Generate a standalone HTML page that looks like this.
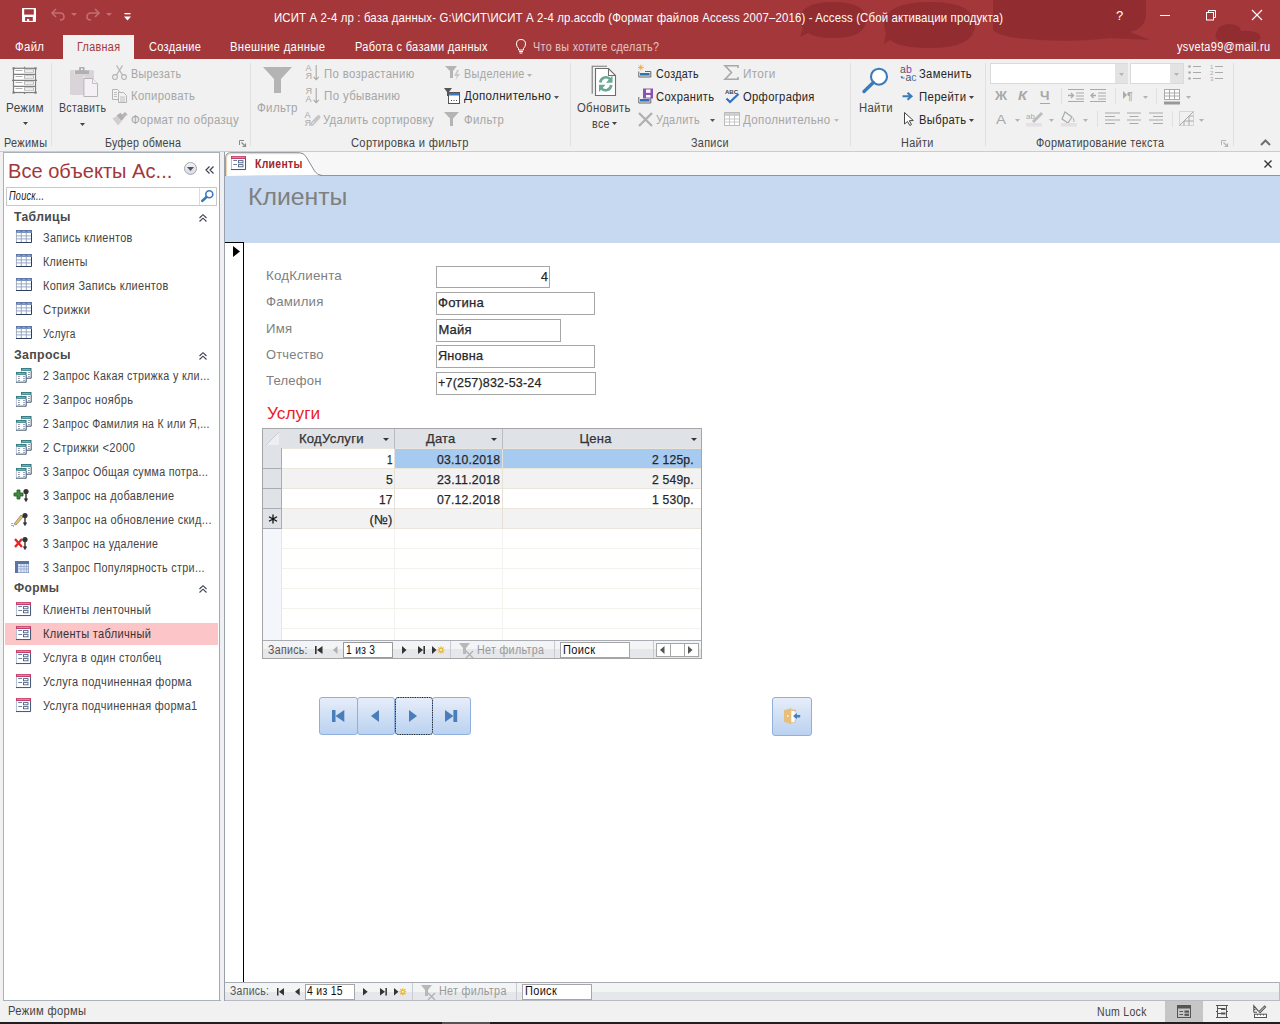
<!DOCTYPE html>
<html><head><meta charset="utf-8">
<style>
*{margin:0;padding:0;box-sizing:border-box}
html,body{width:1280px;height:1024px;overflow:hidden;background:#fff;position:relative}
.t{position:absolute;white-space:nowrap}
svg{overflow:visible}
</style></head><body>
<div style="position:absolute;left:0px;top:0px;width:1280px;height:59px;background:#a4373a"></div>
<svg style="position:absolute;left:0;top:0" width="1280" height="59"><g fill="#8a2a2d" opacity="0.7"><path d="M833 2 Q866 2 866 20 Q866 38 833 38 Q815 38 808 33 L800 37 L803 28 Q800 24 800 20 Q800 2 833 2Z"/><path d="M930 2 Q975 2 975 25 Q975 48 930 48 Q900 48 890 40 L884 44 L886 33 Q884 29 884 25 Q884 2 930 2Z"/><path d="M993 0 H1146 V14 Q1146 28 1130 32 L1150 40 L1110 38 Q1080 42 1040 40 Q1000 38 993 30Z"/><path d="M1228 24 Q1240 24 1241 31 Q1250 30 1258 33 Q1264 38 1256 42 H1222 Q1214 40 1216 33 Q1218 25 1228 24Z"/></g></svg>
<svg style="position:absolute;left:22px;top:8px" width="14" height="14" viewBox="0 0 14 14"><rect x="0" y="0" width="14" height="14" rx="0.8" fill="#fff"/><rect x="2.2" y="1.3" width="9.6" height="5.3" fill="#a4373a"/><rect x="3.1" y="9" width="7.7" height="3.9" fill="#a4373a"/><rect x="5" y="10.9" width="2.2" height="2.1" fill="#fff"/></svg>
<svg style="position:absolute;left:50px;top:8px" width="16" height="13" viewBox="0 0 16 13"><path d="M3 5 H10 Q14 5 14 9 Q14 12 10 12" fill="none" stroke="#c46f72" stroke-width="1.6"/><path d="M6 1 L2 5 L6 9" fill="none" stroke="#c46f72" stroke-width="1.6"/></svg>
<svg style="position:absolute;left:71px;top:13px" width="6" height="3" viewBox="0 0 6 3"><path d="M0 0 H6 L3 3Z" fill="#c46f72"/></svg>
<svg style="position:absolute;left:85px;top:8px" width="16" height="13" viewBox="0 0 16 13"><path d="M13 5 H6 Q2 5 2 9 Q2 12 6 12" fill="none" stroke="#c46f72" stroke-width="1.6"/><path d="M10 1 L14 5 L10 9" fill="none" stroke="#c46f72" stroke-width="1.6"/></svg>
<svg style="position:absolute;left:106px;top:13px" width="6" height="3" viewBox="0 0 6 3"><path d="M0 0 H6 L3 3Z" fill="#c46f72"/></svg>
<svg style="position:absolute;left:124px;top:13px" width="7" height="8" viewBox="0 0 7 8"><rect x="0.5" y="0" width="6" height="1.3" fill="#fff"/><path d="M0 3.5 H7 L3.5 7.5Z" fill="#fff"/></svg>
<div style="position:absolute;left:1160px;top:15px;width:10px;height:1px;background:#fff"></div>
<svg style="position:absolute;left:1205px;top:9px" width="12" height="12" viewBox="0 0 12 12"><rect x="1.5" y="3.5" width="7" height="7.5" fill="none" stroke="#fff" stroke-width="1"/><path d="M3.5 3.5 V1.5 H10.5 V8.5 H8.5" fill="none" stroke="#fff" stroke-width="1"/></svg>
<svg style="position:absolute;left:1251px;top:9px" width="12" height="12" viewBox="0 0 12 12"><path d="M1 1 L11 11 M11 1 L1 11" stroke="#fff" stroke-width="1.1"/></svg>
<div style="position:absolute;left:63px;top:35px;width:71px;height:24px;background:#f1f1f1"></div>
<svg style="position:absolute;left:515px;top:38px" width="12" height="16" viewBox="0 0 12 16"><path d="M6 1.5 Q10.5 1.5 10.5 6 Q10.5 8.5 8.5 10.5 V12 H3.5 V10.5 Q1.5 8.5 1.5 6 Q1.5 1.5 6 1.5Z" fill="none" stroke="#fff" stroke-width="1"/><path d="M4 13.5 H8 M4.5 15 H7.5" stroke="#fff" stroke-width="1"/></svg>
<div style="position:absolute;left:0px;top:59px;width:1280px;height:93px;background:#f1f1f1"></div>
<div style="position:absolute;left:0px;top:151px;width:1280px;height:1px;background:#cccccc"></div>
<div style="position:absolute;left:51px;top:63px;width:1px;height:83px;background:#e0e0e0"></div>
<div style="position:absolute;left:250px;top:63px;width:1px;height:83px;background:#e0e0e0"></div>
<div style="position:absolute;left:570px;top:63px;width:1px;height:83px;background:#e0e0e0"></div>
<div style="position:absolute;left:850px;top:63px;width:1px;height:83px;background:#e0e0e0"></div>
<div style="position:absolute;left:985px;top:63px;width:1px;height:83px;background:#e0e0e0"></div>
<div style="position:absolute;left:1233px;top:63px;width:1px;height:83px;background:#e0e0e0"></div>
<svg style="position:absolute;left:239px;top:140px" width="7" height="7" viewBox="0 0 7 7"><path d="M0.5 5 V0.5 H5" fill="none" stroke="#8a8a8a" stroke-width="1"/><path d="M2.5 2.5 L6.5 6.5 M3.5 6.5 H6.5 V3.5" fill="none" stroke="#8a8a8a" stroke-width="1.2"/></svg>
<svg style="position:absolute;left:1221px;top:140px" width="7" height="7" viewBox="0 0 7 7"><g opacity="0.6"><path d="M0.5 5 V0.5 H5" fill="none" stroke="#8a8a8a" stroke-width="1"/><path d="M2.5 2.5 L6.5 6.5 M3.5 6.5 H6.5 V3.5" fill="none" stroke="#8a8a8a" stroke-width="1.2"/></g></svg>
<svg style="position:absolute;left:1260px;top:139px" width="11" height="7" viewBox="0 0 11 7"><path d="M1 6 L5.5 1.5 L10 6" fill="none" stroke="#707070" stroke-width="2"/></svg>
<svg style="position:absolute;left:12px;top:66px" width="26" height="29" viewBox="0 0 26 29"><rect x="1.5" y="2.3" width="22" height="24.2" fill="#fff" stroke="#7f7f7f" stroke-width="1.2"/><path d="M3.5 4.5 H10.5" stroke="#b0b0b0" stroke-width="1"/><rect x="12.5" y="3.8" width="9" height="2.4" fill="none" stroke="#b0b0b0" stroke-width="0.9"/><path d="M3.5 10.5 H10.5" stroke="#b0b0b0" stroke-width="1"/><rect x="12.5" y="9.8" width="9" height="2.4" fill="none" stroke="#b0b0b0" stroke-width="0.9"/><path d="M3.5 16.5 H10.5" stroke="#b0b0b0" stroke-width="1"/><rect x="12.5" y="15.8" width="9" height="2.4" fill="none" stroke="#b0b0b0" stroke-width="0.9"/><path d="M3.5 22.5 H10.5" stroke="#b0b0b0" stroke-width="1"/><rect x="12.5" y="21.8" width="9" height="2.4" fill="none" stroke="#b0b0b0" stroke-width="0.9"/><path d="M1.5 8.3 H23.5 M1.5 14.3 H23.5 M1.5 20.3 H23.5" stroke="#7f7f7f" stroke-width="1.2"/><rect x="0.5" y="1.3" width="2.2" height="2.2" fill="#7f7f7f"/><rect x="22.5" y="1.3" width="2.2" height="2.2" fill="#7f7f7f"/><rect x="0.5" y="25.5" width="2.2" height="2.2" fill="#7f7f7f"/><rect x="22.5" y="25.5" width="2.2" height="2.2" fill="#7f7f7f"/><path d="M12.5 0.8 V2.3 M12.5 26.5 V28 M0 14.3 H1.5 M23.5 14.3 H25" stroke="#7f7f7f" stroke-width="1.2"/></svg>
<svg style="position:absolute;left:23px;top:122px" width="5" height="3" viewBox="0 0 5 3"><path d="M0 0 H5 L2.5 3Z" fill="#444444"/></svg>
<svg style="position:absolute;left:70px;top:66px" width="29" height="32" viewBox="0 0 29 32"><rect x="0" y="4" width="24" height="25" rx="1.5" fill="#d9d4d7"/><path d="M4.5 4.3 H19 V8 H4.5Z" fill="#f1f1f1"/><rect x="5" y="4.3" width="14" height="3.7" fill="#b3afb1"/><rect x="9" y="1" width="5.6" height="4" rx="1.2" fill="#b3afb1"/><rect x="11" y="2.5" width="1.6" height="1.5" fill="#fff"/><path d="M13 11 H15" stroke="#f1f1f1"/><path d="M13.9 12.5 H22.5 L27.5 17.5 V30.5 H13.9Z" fill="#f5f0f5" stroke="#b8b3b6" stroke-width="1"/><path d="M22.5 12.5 V17.5 H27.5" fill="#f1f1f1" stroke="#b8b3b6" stroke-width="0.8"/></svg>
<svg style="position:absolute;left:80px;top:123px" width="5" height="3" viewBox="0 0 5 3"><path d="M0 0 H5 L2.5 3Z" fill="#444444"/></svg>
<svg style="position:absolute;left:112px;top:65px" width="15" height="15" viewBox="0 0 15 15"><circle cx="3" cy="12" r="2.4" fill="none" stroke="#b4b4b4" stroke-width="1.1"/><circle cx="12" cy="12" r="2.4" fill="none" stroke="#b4b4b4" stroke-width="1.1"/><path d="M4.5 10 L10.5 0.5 M10.5 10 L4.5 0.5" stroke="#b4b4b4" stroke-width="1.3"/></svg>
<svg style="position:absolute;left:112px;top:89px" width="15" height="14" viewBox="0 0 15 14"><path d="M0.5 0.5 H5.5 L7 2 V10.5 H0.5Z" fill="#f5f0f5" stroke="#b4b4b4"/><path d="M6.5 3.5 H11.5 L14.5 6.5 V13.5 H6.5Z" fill="#f5f0f5" stroke="#b4b4b4"/><path d="M2 3.5 H5 M2 5.5 H5 M2 7.5 H5 M8 8 H13 M8 10 H13 M8 12 H13" stroke="#b4b4b4" stroke-width="0.8"/></svg>
<svg style="position:absolute;left:112px;top:112px" width="16" height="14" viewBox="0 0 16 14"><path d="M0.5 6.5 L5 4 L9.5 9.5 L6 13.5Z" fill="#d2ced1"/><path d="M4.5 3.5 L8.5 0.8 L12.5 5.5 L9.5 9Z" fill="#b3afb2"/><path d="M10 2.5 L13 0 L15.5 2.5 L12 5.5Z" fill="#b8b4b7"/></svg>
<svg style="position:absolute;left:263px;top:67px" width="29" height="27" viewBox="0 0 29 27"><path d="M0 0 H29 L18 12 V26 H11 V12Z" fill="#b4b4b4"/></svg>
<svg style="position:absolute;left:305px;top:65px" width="16" height="16" viewBox="0 0 16 16"><text x="0.5" y="6.3" font-family="Liberation Sans" font-size="9" fill="#a8a8a8">А</text><text x="0.5" y="14.3" font-family="Liberation Sans" font-size="9" fill="#a8a8a8">Я</text><path d="M11.2 0 V14.5 M8.6 11.8 L11.2 14.6 L13.8 11.8" fill="none" stroke="#a8a8a8" stroke-width="1.1"/></svg>
<svg style="position:absolute;left:305px;top:88px" width="16" height="16" viewBox="0 0 16 16"><text x="0.5" y="6.3" font-family="Liberation Sans" font-size="9" fill="#a8a8a8">Я</text><text x="0.5" y="14.3" font-family="Liberation Sans" font-size="9" fill="#a8a8a8">А</text><path d="M11.2 0 V14.5 M8.6 11.8 L11.2 14.6 L13.8 11.8" fill="none" stroke="#a8a8a8" stroke-width="1.1"/></svg>
<svg style="position:absolute;left:304px;top:111px" width="17" height="16" viewBox="0 0 17 16"><text x="0.5" y="6.6" font-family="Liberation Sans" font-size="9" fill="#a8a8a8">А</text><text x="0.5" y="14.6" font-family="Liberation Sans" font-size="9" fill="#a8a8a8">Я</text><path d="M8 13 L14.5 6" stroke="#c8c4c8" stroke-width="4" stroke-linecap="round"/><path d="M8.3 12.7 L10 11" stroke="#f1f1f1" stroke-width="1"/></svg>
<svg style="position:absolute;left:445px;top:66px" width="15" height="15" viewBox="0 0 15 15"><path d="M0 0 H12 L8 5 V12 H5 V5Z" fill="#b4b4b4"/><path d="M12 4 L9 10 H12 L10 15 L15 8 H12 L14 4Z" fill="#c8c8c8"/></svg>
<svg style="position:absolute;left:527px;top:74px" width="5" height="3" viewBox="0 0 5 3"><path d="M0 0 H5 L2.5 3Z" fill="#b4b4b4"/></svg>
<svg style="position:absolute;left:444px;top:88px" width="16" height="16" viewBox="0 0 16 16"><path d="M0 0 H8 L5 4 V8 H3 V4Z" fill="#555"/><rect x="4.5" y="4.5" width="11" height="11" fill="#fff" stroke="#555"/><rect x="5" y="5" width="10" height="2.5" fill="#3a78c3"/><path d="M7 12.5 H8 M9.5 12.5 H10.5 M12 12.5 H13" stroke="#444" stroke-width="1.2"/></svg>
<svg style="position:absolute;left:554px;top:96px" width="5" height="3" viewBox="0 0 5 3"><path d="M0 0 H5 L2.5 3Z" fill="#555"/></svg>
<svg style="position:absolute;left:444px;top:111.6px" width="15" height="14" viewBox="0 0 15 14"><path d="M0 0 H15 L9 6.5 V14 H6 V6.5Z" fill="#b4b4b4"/></svg>
<svg style="position:absolute;left:591px;top:65px" width="27" height="32" viewBox="0 0 27 32"><path d="M1.2 28.8 V1.3 H16" fill="none" stroke="#7a7a7a" stroke-width="1.1"/><path d="M4.5 3.5 H17.5 L24.5 10.5 V30.5 H4.5Z" fill="#fff" stroke="#6d6d6d" stroke-width="1.1"/><path d="M17.5 3.5 V10.5 H24.5" fill="none" stroke="#6d6d6d" stroke-width="1.1"/><path d="M9.2 17.5 A5.8 5.8 0 0 1 19.5 14.5" fill="none" stroke="#6aa88f" stroke-width="2.6"/><path d="M21.5 10.5 V17.8 H15Z" fill="#6aa88f"/><path d="M20.3 20 A5.8 5.8 0 0 1 10 23" fill="none" stroke="#6aa88f" stroke-width="2.6"/><path d="M8 27 V19.8 H14.5Z" fill="#6aa88f"/></svg>
<svg style="position:absolute;left:612.3px;top:122px" width="5" height="3" viewBox="0 0 5 3"><path d="M0 0 H5 L2.5 3Z" fill="#444444"/></svg>
<svg style="position:absolute;left:637px;top:64px" width="15" height="14" viewBox="0 0 15 14"><path d="M3.8 0.5 V6.5 M0.8 3.5 H6.8 M1.7 1.4 L5.9 5.6 M5.9 1.4 L1.7 5.6" stroke="#f0b050" stroke-width="0.9"/><circle cx="3.8" cy="3.5" r="1.3" fill="#f0b050"/><path d="M1.8 7.5 V13 H13.8 V7.5 H8" fill="none" stroke="#666" stroke-width="1"/><rect x="3" y="9" width="9.6" height="2.6" fill="#2f72b8"/></svg>
<svg style="position:absolute;left:637px;top:87.5px" width="17" height="16" viewBox="0 0 17 16"><path d="M1.8 9 V15 H13.8 V10" fill="none" stroke="#666" stroke-width="1"/><rect x="3" y="11" width="9.6" height="2.6" fill="#2f72b8"/><rect x="6" y="0.5" width="10" height="10" fill="#8c52b0"/><rect x="9" y="1.5" width="4.5" height="3.3" fill="#fff"/><rect x="9" y="7" width="4.5" height="2.5" fill="#fff"/></svg>
<svg style="position:absolute;left:637.5px;top:111.7px" width="15" height="15" viewBox="0 0 15 15"><path d="M1 1 L14 14 M14 1 L1 14" stroke="#b0b0b0" stroke-width="2.3"/></svg>
<svg style="position:absolute;left:710px;top:119px" width="5" height="3" viewBox="0 0 5 3"><path d="M0 0 H5 L2.5 3Z" fill="#555"/></svg>
<svg style="position:absolute;left:724px;top:65px" width="15" height="15" viewBox="0 0 15 15"><path d="M14 3 V0.8 H1 L7.5 7.5 L1 14.2 H14 V12" fill="none" stroke="#a8a8a8" stroke-width="1.6"/></svg>
<svg style="position:absolute;left:725px;top:87.5px" width="15" height="16" viewBox="0 0 15 16"><text x="0" y="5.5" font-family="Liberation Sans" font-weight="bold" font-size="6" fill="#444">ABC</text><path d="M1.5 10.5 L5 14 L13.5 6" fill="none" stroke="#2f72c4" stroke-width="2.2"/></svg>
<svg style="position:absolute;left:724px;top:111.6px" width="16" height="14" viewBox="0 0 16 14"><rect x="0.5" y="0.5" width="15" height="13" fill="#fff" stroke="#bbb"/><rect x="1" y="1" width="14" height="3" fill="#d0d0d0"/><path d="M1 7 H15 M1 10 H15 M5.5 1 V13 M10.5 1 V13" stroke="#c8c8c8"/></svg>
<svg style="position:absolute;left:834px;top:119px" width="5" height="3" viewBox="0 0 5 3"><path d="M0 0 H5 L2.5 3Z" fill="#bdbdbd"/></svg>
<svg style="position:absolute;left:861px;top:66px" width="29" height="28" viewBox="0 0 29 28"><circle cx="18" cy="10.7" r="8" fill="#fff" stroke="#3d7ab8" stroke-width="2.1"/><path d="M12.3 16.5 L3 25.5" stroke="#3d7ab8" stroke-width="3.4" stroke-linecap="round"/></svg>
<svg style="position:absolute;left:899.5px;top:64.5px" width="17" height="17" viewBox="0 0 17 17"><text x="0" y="8.3" font-family="Liberation Sans" font-size="10.5" fill="#555">a</text><text x="6" y="8.3" font-family="Liberation Sans" font-size="10.5" fill="#8040b0">b</text><text x="5.5" y="15.6" font-family="Liberation Sans" font-size="10.5" fill="#555">a</text><text x="11.3" y="15.6" font-family="Liberation Sans" font-size="10.5" fill="#3d7ab8">c</text><path d="M1 11 L1.8 13 L4.5 13 M1.2 13 L3 11.6" fill="none" stroke="#3d7ab8" stroke-width="1"/></svg>
<svg style="position:absolute;left:902px;top:91.5px" width="12" height="9" viewBox="0 0 12 9"><path d="M0.5 4.3 H9 M5.5 0.8 L9.5 4.3 L5.5 7.8" fill="none" stroke="#3d7ab8" stroke-width="2.1"/></svg>
<svg style="position:absolute;left:969px;top:96px" width="5" height="3" viewBox="0 0 5 3"><path d="M0 0 H5 L2.5 3Z" fill="#444444"/></svg>
<svg style="position:absolute;left:903.5px;top:112px" width="10" height="14" viewBox="0 0 10 14"><path d="M0.5 0.5 V12 L3.5 9.5 L5.8 13.5 L7.5 12.5 L5.3 8.7 L9.3 8.5Z" fill="#fff" stroke="#444" stroke-width="1"/></svg>
<svg style="position:absolute;left:969px;top:119px" width="5" height="3" viewBox="0 0 5 3"><path d="M0 0 H5 L2.5 3Z" fill="#444444"/></svg>
<div style="position:absolute;left:990px;top:62.7px;width:138px;height:21.5px;background:#fff;border:1px solid #dadada"></div>
<div style="position:absolute;left:1115px;top:63.7px;width:12.5px;height:19.5px;background:#e3e3e3"></div>
<svg style="position:absolute;left:1119px;top:73px" width="5" height="3" viewBox="0 0 5 3"><path d="M0 0 H5 L2.5 3Z" fill="#b4b4b4"/></svg>
<div style="position:absolute;left:1129.5px;top:62.7px;width:54px;height:21.5px;background:#fff;border:1px solid #dadada"></div>
<div style="position:absolute;left:1170px;top:63.7px;width:12.5px;height:19.5px;background:#e3e3e3"></div>
<svg style="position:absolute;left:1174px;top:73px" width="5" height="3" viewBox="0 0 5 3"><path d="M0 0 H5 L2.5 3Z" fill="#b4b4b4"/></svg>
<svg style="position:absolute;left:1188px;top:64px" width="14" height="16" viewBox="0 0 14 16"><circle cx="1.5" cy="2.5" r="1.3" fill="#aaa"/><circle cx="1.5" cy="8.5" r="1.3" fill="#aaa"/><circle cx="1.5" cy="14.5" r="1.3" fill="#aaa"/><path d="M5 2.5 H13 M5 8.5 H13 M5 14.5 H13" stroke="#aaa" stroke-width="1"/></svg>
<svg style="position:absolute;left:1210px;top:64px" width="14" height="17" viewBox="0 0 14 17"><text x="0" y="5" font-family="Liberation Sans" font-size="6" fill="#aaa">1</text><text x="0" y="11" font-family="Liberation Sans" font-size="6" fill="#aaa">2</text><text x="0" y="17" font-family="Liberation Sans" font-size="6" fill="#aaa">3</text><path d="M5 2.5 H13 M5 8.5 H13 M5 14.5 H13" stroke="#aaa" stroke-width="1"/></svg>
<div style="position:absolute;left:1040px;top:102.5px;width:10px;height:1.2px;background:#a8a8a8"></div>
<div style="position:absolute;left:1061px;top:88px;width:1px;height:16px;background:#e0e0e0"></div>
<div style="position:absolute;left:1115px;top:88px;width:1px;height:16px;background:#e0e0e0"></div>
<div style="position:absolute;left:1156px;top:88px;width:1px;height:16px;background:#e0e0e0"></div>
<div style="position:absolute;left:1097px;top:111px;width:1px;height:16px;background:#e0e0e0"></div>
<div style="position:absolute;left:1172px;top:111px;width:1px;height:16px;background:#e0e0e0"></div>
<svg style="position:absolute;left:1068px;top:89px" width="17" height="13" viewBox="0 0 17 13"><path d="M0 0.5 H16 M8 4 H16 M8 7 H16 M8 10 H16 M0 12.5 H16" stroke="#aaa" stroke-width="1"/><path d="M0 6.5 H5 M3 4 L5.5 6.5 L3 9" fill="none" stroke="#aaa" stroke-width="1.3"/></svg>
<svg style="position:absolute;left:1090px;top:89px" width="17" height="13" viewBox="0 0 17 13"><path d="M0 0.5 H16 M8 4 H16 M8 7 H16 M8 10 H16 M0 12.5 H16" stroke="#aaa" stroke-width="1"/><path d="M1 6.5 H6 M3.5 4 L1 6.5 L3.5 9" fill="none" stroke="#aaa" stroke-width="1.3"/></svg>
<svg style="position:absolute;left:1123px;top:90px" width="13" height="11" viewBox="0 0 13 11"><path d="M0 1 L4 5 L0 9Z" fill="#aaa"/><text x="4" y="9.5" font-family="Liberation Sans" font-weight="bold" font-size="10" fill="#aaa">¶</text></svg>
<svg style="position:absolute;left:1143px;top:96px" width="5" height="3" viewBox="0 0 5 3"><path d="M0 0 H5 L2.5 3Z" fill="#b4b4b4"/></svg>
<svg style="position:absolute;left:1164px;top:88.5px" width="16" height="16" viewBox="0 0 16 16"><rect x="0.5" y="0.5" width="15" height="10" fill="#fff" stroke="#aaa"/><path d="M0.5 4 H15.5 M0.5 7 H15.5 M5.5 0.5 V10.5 M10.5 0.5 V10.5" stroke="#aaa"/><rect x="0" y="12.5" width="16" height="3" fill="#999"/></svg>
<svg style="position:absolute;left:1186px;top:96px" width="5" height="3" viewBox="0 0 5 3"><path d="M0 0 H5 L2.5 3Z" fill="#b4b4b4"/></svg>
<svg style="position:absolute;left:1014.5px;top:119px" width="5" height="3" viewBox="0 0 5 3"><path d="M0 0 H5 L2.5 3Z" fill="#b4b4b4"/></svg>
<svg style="position:absolute;left:1026px;top:111px" width="18" height="15" viewBox="0 0 18 15"><text x="0" y="8" font-family="Liberation Sans" font-size="8" fill="#aaa">ab</text><path d="M6 10 L15 1 L17 3 L8 12Z" fill="#bbb"/><rect x="0" y="12" width="16" height="3.5" fill="#e6dfe6"/></svg>
<svg style="position:absolute;left:1049px;top:119px" width="5" height="3" viewBox="0 0 5 3"><path d="M0 0 H5 L2.5 3Z" fill="#b4b4b4"/></svg>
<svg style="position:absolute;left:1061px;top:111px" width="17" height="15" viewBox="0 0 17 15"><path d="M4 1 L11 6 L7 12 L1 8Z" fill="none" stroke="#aaa" stroke-width="1.2"/><path d="M12 7 Q14 10 12.5 11" stroke="#aaa" fill="none"/><rect x="0" y="12" width="16" height="3.5" fill="#e6dfe6"/></svg>
<svg style="position:absolute;left:1083px;top:119px" width="5" height="3" viewBox="0 0 5 3"><path d="M0 0 H5 L2.5 3Z" fill="#b4b4b4"/></svg>
<svg style="position:absolute;left:1104.5px;top:112px" width="15" height="12" viewBox="0 0 15 12"><path d="M0 1 H15 M0 4.5 H10 M0 8 H15 M0 11.5 H10" stroke="#aaa" stroke-width="1.1"/></svg>
<svg style="position:absolute;left:1127px;top:112px" width="14" height="12" viewBox="0 0 14 12"><path d="M0 1 H14 M2.5 4.5 H11.5 M0 8 H14 M2.5 11.5 H11.5" stroke="#aaa" stroke-width="1.1"/></svg>
<svg style="position:absolute;left:1149px;top:112px" width="14" height="12" viewBox="0 0 14 12"><path d="M0 1 H14 M4 4.5 H14 M0 8 H14 M4 11.5 H14" stroke="#aaa" stroke-width="1.1"/></svg>
<svg style="position:absolute;left:1179px;top:111px" width="15" height="15" viewBox="0 0 15 15"><rect x="0.5" y="0.5" width="14" height="14" fill="none" stroke="#bbb" stroke-dasharray="1,1"/><path d="M0.5 14.5 L14.5 0.5 M5 10 V14.5 M10 5 V14.5 M5 10 H14.5 M10 5 H14.5" stroke="#aaa" stroke-width="1"/></svg>
<svg style="position:absolute;left:1199px;top:119px" width="5" height="3" viewBox="0 0 5 3"><path d="M0 0 H5 L2.5 3Z" fill="#b4b4b4"/></svg>
<div style="position:absolute;left:0px;top:152px;width:220px;height:849px;background:#f1f1f1"></div>
<div style="position:absolute;left:3px;top:152px;width:217px;height:849px;background:#fff;border-left:1px solid #a9b1bd;border-top:1px solid #a9b1bd;border-right:1px solid #a3a9b3"></div>
<div style="position:absolute;left:220px;top:152px;width:5px;height:849px;background:#eef0f3;border-right:1px solid #9aa0aa"></div>
<svg style="position:absolute;left:184px;top:162px" width="13" height="13" viewBox="0 0 13 13"><defs><linearGradient id="gc" x1="0" y1="0" x2="0" y2="1"><stop offset="0" stop-color="#f4f4f6"/><stop offset="1" stop-color="#d7d9de"/></linearGradient></defs><circle cx="6.5" cy="6.5" r="6" fill="url(#gc)" stroke="#a6a9b0" stroke-width="1"/><path d="M3 5 H10 L6.5 9Z" fill="#4d5466"/></svg>
<svg style="position:absolute;left:205px;top:166px" width="9" height="8" viewBox="0 0 9 8"><path d="M4.5 0.5 L1 4 L4.5 7.5 M8.5 0.5 L5 4 L8.5 7.5" fill="none" stroke="#3b4250" stroke-width="1.2"/></svg>
<div style="position:absolute;left:6px;top:187px;width:211px;height:19px;background:#fff;border:1px solid #c8c8c8"></div>
<div style="position:absolute;left:199px;top:188px;width:1px;height:17px;background:#dcdcdc"></div>
<svg style="position:absolute;left:201px;top:190px" width="13" height="12" viewBox="0 0 13 12"><circle cx="8.3" cy="4.3" r="3.5" fill="none" stroke="#3b79bb" stroke-width="1.6"/><path d="M5.5 7 L1.2 11" stroke="#3b79bb" stroke-width="2.4" stroke-linecap="round"/></svg>
<svg style="position:absolute;left:199px;top:213.5px" width="8" height="8" viewBox="0 0 8 8"><path d="M0.5 4 L4 0.7 L7.5 4 M0.5 7.5 L4 4.2 L7.5 7.5" fill="none" stroke="#3b4250" stroke-width="1.1"/></svg>
<svg style="position:absolute;left:16px;top:230.1px" width="16" height="13" viewBox="0 0 16 13"><rect x="0" y="0" width="16" height="13" fill="#fff"/><rect x="0" y="0" width="16" height="2.8" fill="#5b76ab"/><path d="M1.2 1.4 H4.5 M6.2 1.4 H9.5 M11.2 1.4 H14.5" stroke="#9fb2d8" stroke-width="0.8"/><path d="M0.45 2.8 V12.5" stroke="#9aa8c4" stroke-width="0.9"/><path d="M5.3 2.8 V12.5 M10.3 2.8 V12.5 M0 5.9 H15 M0 8.9 H15" stroke="#9aa8c4" stroke-width="1"/><path d="M15.5 2.8 V12.5 H0" fill="none" stroke="#2b3f5e" stroke-width="1"/></svg>
<svg style="position:absolute;left:16px;top:254.10000000000002px" width="16" height="13" viewBox="0 0 16 13"><rect x="0" y="0" width="16" height="13" fill="#fff"/><rect x="0" y="0" width="16" height="2.8" fill="#5b76ab"/><path d="M1.2 1.4 H4.5 M6.2 1.4 H9.5 M11.2 1.4 H14.5" stroke="#9fb2d8" stroke-width="0.8"/><path d="M0.45 2.8 V12.5" stroke="#9aa8c4" stroke-width="0.9"/><path d="M5.3 2.8 V12.5 M10.3 2.8 V12.5 M0 5.9 H15 M0 8.9 H15" stroke="#9aa8c4" stroke-width="1"/><path d="M15.5 2.8 V12.5 H0" fill="none" stroke="#2b3f5e" stroke-width="1"/></svg>
<svg style="position:absolute;left:16px;top:278.1px" width="16" height="13" viewBox="0 0 16 13"><rect x="0" y="0" width="16" height="13" fill="#fff"/><rect x="0" y="0" width="16" height="2.8" fill="#5b76ab"/><path d="M1.2 1.4 H4.5 M6.2 1.4 H9.5 M11.2 1.4 H14.5" stroke="#9fb2d8" stroke-width="0.8"/><path d="M0.45 2.8 V12.5" stroke="#9aa8c4" stroke-width="0.9"/><path d="M5.3 2.8 V12.5 M10.3 2.8 V12.5 M0 5.9 H15 M0 8.9 H15" stroke="#9aa8c4" stroke-width="1"/><path d="M15.5 2.8 V12.5 H0" fill="none" stroke="#2b3f5e" stroke-width="1"/></svg>
<svg style="position:absolute;left:16px;top:302.1px" width="16" height="13" viewBox="0 0 16 13"><rect x="0" y="0" width="16" height="13" fill="#fff"/><rect x="0" y="0" width="16" height="2.8" fill="#5b76ab"/><path d="M1.2 1.4 H4.5 M6.2 1.4 H9.5 M11.2 1.4 H14.5" stroke="#9fb2d8" stroke-width="0.8"/><path d="M0.45 2.8 V12.5" stroke="#9aa8c4" stroke-width="0.9"/><path d="M5.3 2.8 V12.5 M10.3 2.8 V12.5 M0 5.9 H15 M0 8.9 H15" stroke="#9aa8c4" stroke-width="1"/><path d="M15.5 2.8 V12.5 H0" fill="none" stroke="#2b3f5e" stroke-width="1"/></svg>
<svg style="position:absolute;left:16px;top:326.1px" width="16" height="13" viewBox="0 0 16 13"><rect x="0" y="0" width="16" height="13" fill="#fff"/><rect x="0" y="0" width="16" height="2.8" fill="#5b76ab"/><path d="M1.2 1.4 H4.5 M6.2 1.4 H9.5 M11.2 1.4 H14.5" stroke="#9fb2d8" stroke-width="0.8"/><path d="M0.45 2.8 V12.5" stroke="#9aa8c4" stroke-width="0.9"/><path d="M5.3 2.8 V12.5 M10.3 2.8 V12.5 M0 5.9 H15 M0 8.9 H15" stroke="#9aa8c4" stroke-width="1"/><path d="M15.5 2.8 V12.5 H0" fill="none" stroke="#2b3f5e" stroke-width="1"/></svg>
<svg style="position:absolute;left:199px;top:351.5px" width="8" height="8" viewBox="0 0 8 8"><path d="M0.5 4 L4 0.7 L7.5 4 M0.5 7.5 L4 4.2 L7.5 7.5" fill="none" stroke="#3b4250" stroke-width="1.1"/></svg>
<svg style="position:absolute;left:16px;top:368.09999999999997px" width="17" height="15" viewBox="0 0 17 15"><rect x="5" y="0" width="10.5" height="10.5" fill="#fff"/><rect x="5" y="0" width="10.5" height="2.8" fill="#2f7b82"/><path d="M6.2 1.4 H14.3" stroke="#8cc6cc" stroke-width="0.8"/><path d="M5.4 2.8 V10.2" stroke="#b3bdd0" stroke-width="0.9"/><path d="M15.2 2.8 V10.2 H5" fill="none" stroke="#2b3f5e" stroke-width="0.9"/><path d="M7 4.5 H9 M7 6.5 H9 M7 8.5 H9 M12 4.5 H14 M12 6.5 H14 M12 8.5 H14" stroke="#8d99b0" stroke-width="0.9"/><rect x="0" y="4" width="10.5" height="10.5" fill="#fff"/><rect x="0" y="4" width="10.5" height="2.8" fill="#2f7b82"/><path d="M1.2 5.4 H9.3" stroke="#8cc6cc" stroke-width="0.8"/><path d="M0.4 6.8 V14.2" stroke="#b3bdd0" stroke-width="0.9"/><path d="M10.2 6.8 V14.2 H0" fill="none" stroke="#2b3f5e" stroke-width="0.9"/><path d="M2 8.5 H4 M2 10.5 H4 M2 12.5 H4 M7 8.5 H9 M7 10.5 H9 M7 12.5 H9" stroke="#8d99b0" stroke-width="0.9"/></svg>
<svg style="position:absolute;left:16px;top:392.09999999999997px" width="17" height="15" viewBox="0 0 17 15"><rect x="5" y="0" width="10.5" height="10.5" fill="#fff"/><rect x="5" y="0" width="10.5" height="2.8" fill="#2f7b82"/><path d="M6.2 1.4 H14.3" stroke="#8cc6cc" stroke-width="0.8"/><path d="M5.4 2.8 V10.2" stroke="#b3bdd0" stroke-width="0.9"/><path d="M15.2 2.8 V10.2 H5" fill="none" stroke="#2b3f5e" stroke-width="0.9"/><path d="M7 4.5 H9 M7 6.5 H9 M7 8.5 H9 M12 4.5 H14 M12 6.5 H14 M12 8.5 H14" stroke="#8d99b0" stroke-width="0.9"/><rect x="0" y="4" width="10.5" height="10.5" fill="#fff"/><rect x="0" y="4" width="10.5" height="2.8" fill="#2f7b82"/><path d="M1.2 5.4 H9.3" stroke="#8cc6cc" stroke-width="0.8"/><path d="M0.4 6.8 V14.2" stroke="#b3bdd0" stroke-width="0.9"/><path d="M10.2 6.8 V14.2 H0" fill="none" stroke="#2b3f5e" stroke-width="0.9"/><path d="M2 8.5 H4 M2 10.5 H4 M2 12.5 H4 M7 8.5 H9 M7 10.5 H9 M7 12.5 H9" stroke="#8d99b0" stroke-width="0.9"/></svg>
<svg style="position:absolute;left:16px;top:416.09999999999997px" width="17" height="15" viewBox="0 0 17 15"><rect x="5" y="0" width="10.5" height="10.5" fill="#fff"/><rect x="5" y="0" width="10.5" height="2.8" fill="#2f7b82"/><path d="M6.2 1.4 H14.3" stroke="#8cc6cc" stroke-width="0.8"/><path d="M5.4 2.8 V10.2" stroke="#b3bdd0" stroke-width="0.9"/><path d="M15.2 2.8 V10.2 H5" fill="none" stroke="#2b3f5e" stroke-width="0.9"/><path d="M7 4.5 H9 M7 6.5 H9 M7 8.5 H9 M12 4.5 H14 M12 6.5 H14 M12 8.5 H14" stroke="#8d99b0" stroke-width="0.9"/><rect x="0" y="4" width="10.5" height="10.5" fill="#fff"/><rect x="0" y="4" width="10.5" height="2.8" fill="#2f7b82"/><path d="M1.2 5.4 H9.3" stroke="#8cc6cc" stroke-width="0.8"/><path d="M0.4 6.8 V14.2" stroke="#b3bdd0" stroke-width="0.9"/><path d="M10.2 6.8 V14.2 H0" fill="none" stroke="#2b3f5e" stroke-width="0.9"/><path d="M2 8.5 H4 M2 10.5 H4 M2 12.5 H4 M7 8.5 H9 M7 10.5 H9 M7 12.5 H9" stroke="#8d99b0" stroke-width="0.9"/></svg>
<svg style="position:absolute;left:16px;top:440.09999999999997px" width="17" height="15" viewBox="0 0 17 15"><rect x="5" y="0" width="10.5" height="10.5" fill="#fff"/><rect x="5" y="0" width="10.5" height="2.8" fill="#2f7b82"/><path d="M6.2 1.4 H14.3" stroke="#8cc6cc" stroke-width="0.8"/><path d="M5.4 2.8 V10.2" stroke="#b3bdd0" stroke-width="0.9"/><path d="M15.2 2.8 V10.2 H5" fill="none" stroke="#2b3f5e" stroke-width="0.9"/><path d="M7 4.5 H9 M7 6.5 H9 M7 8.5 H9 M12 4.5 H14 M12 6.5 H14 M12 8.5 H14" stroke="#8d99b0" stroke-width="0.9"/><rect x="0" y="4" width="10.5" height="10.5" fill="#fff"/><rect x="0" y="4" width="10.5" height="2.8" fill="#2f7b82"/><path d="M1.2 5.4 H9.3" stroke="#8cc6cc" stroke-width="0.8"/><path d="M0.4 6.8 V14.2" stroke="#b3bdd0" stroke-width="0.9"/><path d="M10.2 6.8 V14.2 H0" fill="none" stroke="#2b3f5e" stroke-width="0.9"/><path d="M2 8.5 H4 M2 10.5 H4 M2 12.5 H4 M7 8.5 H9 M7 10.5 H9 M7 12.5 H9" stroke="#8d99b0" stroke-width="0.9"/></svg>
<svg style="position:absolute;left:16px;top:464.09999999999997px" width="17" height="15" viewBox="0 0 17 15"><rect x="5" y="0" width="10.5" height="10.5" fill="#fff"/><rect x="5" y="0" width="10.5" height="2.8" fill="#2f7b82"/><path d="M6.2 1.4 H14.3" stroke="#8cc6cc" stroke-width="0.8"/><path d="M5.4 2.8 V10.2" stroke="#b3bdd0" stroke-width="0.9"/><path d="M15.2 2.8 V10.2 H5" fill="none" stroke="#2b3f5e" stroke-width="0.9"/><path d="M7 4.5 H9 M7 6.5 H9 M7 8.5 H9 M12 4.5 H14 M12 6.5 H14 M12 8.5 H14" stroke="#8d99b0" stroke-width="0.9"/><rect x="0" y="4" width="10.5" height="10.5" fill="#fff"/><rect x="0" y="4" width="10.5" height="2.8" fill="#2f7b82"/><path d="M1.2 5.4 H9.3" stroke="#8cc6cc" stroke-width="0.8"/><path d="M0.4 6.8 V14.2" stroke="#b3bdd0" stroke-width="0.9"/><path d="M10.2 6.8 V14.2 H0" fill="none" stroke="#2b3f5e" stroke-width="0.9"/><path d="M2 8.5 H4 M2 10.5 H4 M2 12.5 H4 M7 8.5 H9 M7 10.5 H9 M7 12.5 H9" stroke="#8d99b0" stroke-width="0.9"/></svg>
<svg style="position:absolute;left:13px;top:488.4px" width="17" height="14" viewBox="0 0 17 14"><path d="M4 2 H7 V5 H10 V8 H7 V11 H4 V8 H1 V5 H4Z" fill="#3d8c3d" stroke="#1f5a1f" stroke-width="0.8"/><circle cx="13" cy="3.5" r="2.6" fill="#333"/><path d="M13 5 V12 M11.5 10.5 L13 13 L14.5 10.5" stroke="#333" stroke-width="1.4" fill="none"/></svg>
<svg style="position:absolute;left:12px;top:512.4px" width="17" height="14" viewBox="0 0 17 14"><path d="M2 12 L9 3 L11 5 L4 13Z" fill="#f0c060" stroke="#777" stroke-width="0.7"/><path d="M0 11 V14 H3" stroke="#555" stroke-dasharray="1,1" fill="none"/><circle cx="13" cy="3.5" r="2.6" fill="#333"/><path d="M13 5 V12 M11.5 10.5 L13 13 L14.5 10.5" stroke="#333" stroke-width="1.4" fill="none"/></svg>
<svg style="position:absolute;left:14px;top:536.4px" width="15" height="14" viewBox="0 0 15 14"><path d="M1 3 L8 11 M8 3 L1 11" stroke="#e02828" stroke-width="2.4"/><circle cx="11" cy="3.5" r="2.6" fill="#333"/><path d="M11 5 V12 M9.5 10.5 L11 13 L12.5 10.5" stroke="#333" stroke-width="1.4" fill="none"/></svg>
<svg style="position:absolute;left:14.5px;top:560.9px" width="14" height="12" viewBox="0 0 14 12"><rect x="0" y="0" width="14" height="12" fill="#5d73a8"/><rect x="3" y="3" width="10.5" height="8.5" fill="#dfe6f4"/><path d="M3 5.5 H14 M3 8 H14 M6 3 V12 M9 3 V12 M11.5 3 V12" stroke="#8ea0c8" stroke-width="0.7"/></svg>
<svg style="position:absolute;left:199px;top:585px" width="8" height="8" viewBox="0 0 8 8"><path d="M0.5 4 L4 0.7 L7.5 4 M0.5 7.5 L4 4.2 L7.5 7.5" fill="none" stroke="#3b4250" stroke-width="1.1"/></svg>
<div style="position:absolute;left:5px;top:623px;width:213px;height:22px;background:#fcc5c7"></div>
<svg style="position:absolute;left:16px;top:602.0px" width="15" height="14" viewBox="0 0 15 14"><rect x="0" y="0" width="15" height="14" fill="#fff"/><rect x="0" y="0" width="15" height="3" fill="#c4406c"/><path d="M1.2 1.3 H13.8" stroke="#e7a0b8" stroke-width="0.9"/><path d="M0.45 3 V13.5" stroke="#a9b6cc" stroke-width="0.9"/><path d="M14.55 3 V13.55 H0" fill="none" stroke="#2b3f5e" stroke-width="0.9"/><path d="M2.3 4.5 H6" stroke="#5a6e98" stroke-width="0.9"/><path d="M2.3 8.5 H6" stroke="#5a6e98" stroke-width="0.9"/><rect x="7.5" y="4.6" width="4.5" height="2.2" fill="#fff" stroke="#4d5f86" stroke-width="0.9"/><rect x="7.5" y="8.6" width="4.5" height="2.2" fill="#fff" stroke="#4d5f86" stroke-width="0.9"/></svg>
<svg style="position:absolute;left:16px;top:626.0px" width="15" height="14" viewBox="0 0 15 14"><rect x="0" y="0" width="15" height="14" fill="#fff"/><rect x="0" y="0" width="15" height="3" fill="#c4406c"/><path d="M1.2 1.3 H13.8" stroke="#e7a0b8" stroke-width="0.9"/><path d="M0.45 3 V13.5" stroke="#a9b6cc" stroke-width="0.9"/><path d="M14.55 3 V13.55 H0" fill="none" stroke="#2b3f5e" stroke-width="0.9"/><path d="M2.3 4.5 H6" stroke="#5a6e98" stroke-width="0.9"/><path d="M2.3 8.5 H6" stroke="#5a6e98" stroke-width="0.9"/><rect x="7.5" y="4.6" width="4.5" height="2.2" fill="#fff" stroke="#4d5f86" stroke-width="0.9"/><rect x="7.5" y="8.6" width="4.5" height="2.2" fill="#fff" stroke="#4d5f86" stroke-width="0.9"/></svg>
<svg style="position:absolute;left:16px;top:650.0px" width="15" height="14" viewBox="0 0 15 14"><rect x="0" y="0" width="15" height="14" fill="#fff"/><rect x="0" y="0" width="15" height="3" fill="#c4406c"/><path d="M1.2 1.3 H13.8" stroke="#e7a0b8" stroke-width="0.9"/><path d="M0.45 3 V13.5" stroke="#a9b6cc" stroke-width="0.9"/><path d="M14.55 3 V13.55 H0" fill="none" stroke="#2b3f5e" stroke-width="0.9"/><path d="M2.3 4.5 H6" stroke="#5a6e98" stroke-width="0.9"/><path d="M2.3 8.5 H6" stroke="#5a6e98" stroke-width="0.9"/><rect x="7.5" y="4.6" width="4.5" height="2.2" fill="#fff" stroke="#4d5f86" stroke-width="0.9"/><rect x="7.5" y="8.6" width="4.5" height="2.2" fill="#fff" stroke="#4d5f86" stroke-width="0.9"/></svg>
<svg style="position:absolute;left:16px;top:674.0px" width="15" height="14" viewBox="0 0 15 14"><rect x="0" y="0" width="15" height="14" fill="#fff"/><rect x="0" y="0" width="15" height="3" fill="#c4406c"/><path d="M1.2 1.3 H13.8" stroke="#e7a0b8" stroke-width="0.9"/><path d="M0.45 3 V13.5" stroke="#a9b6cc" stroke-width="0.9"/><path d="M14.55 3 V13.55 H0" fill="none" stroke="#2b3f5e" stroke-width="0.9"/><path d="M2.3 4.5 H6" stroke="#5a6e98" stroke-width="0.9"/><path d="M2.3 8.5 H6" stroke="#5a6e98" stroke-width="0.9"/><rect x="7.5" y="4.6" width="4.5" height="2.2" fill="#fff" stroke="#4d5f86" stroke-width="0.9"/><rect x="7.5" y="8.6" width="4.5" height="2.2" fill="#fff" stroke="#4d5f86" stroke-width="0.9"/></svg>
<svg style="position:absolute;left:16px;top:698.0px" width="15" height="14" viewBox="0 0 15 14"><rect x="0" y="0" width="15" height="14" fill="#fff"/><rect x="0" y="0" width="15" height="3" fill="#c4406c"/><path d="M1.2 1.3 H13.8" stroke="#e7a0b8" stroke-width="0.9"/><path d="M0.45 3 V13.5" stroke="#a9b6cc" stroke-width="0.9"/><path d="M14.55 3 V13.55 H0" fill="none" stroke="#2b3f5e" stroke-width="0.9"/><path d="M2.3 4.5 H6" stroke="#5a6e98" stroke-width="0.9"/><path d="M2.3 8.5 H6" stroke="#5a6e98" stroke-width="0.9"/><rect x="7.5" y="4.6" width="4.5" height="2.2" fill="#fff" stroke="#4d5f86" stroke-width="0.9"/><rect x="7.5" y="8.6" width="4.5" height="2.2" fill="#fff" stroke="#4d5f86" stroke-width="0.9"/></svg>
<div style="position:absolute;left:225px;top:152px;width:1055px;height:849px;background:#fff"></div>
<div style="position:absolute;left:225px;top:152px;width:1055px;height:24px;background:#f7f7f7;border-bottom:1px solid #8f959e"></div>
<svg style="position:absolute;left:225px;top:152px" width="97" height="24" viewBox="0 0 97 24"><path d="M0.7 24 V6 Q0.7 0.7 6 0.7 H74 Q78.5 0.7 81 4.5 L89.5 19 Q92.5 23.5 97 23.5" fill="#fff" stroke="#858b94" stroke-width="1"/><path d="M1.6 24 V6.5 Q1.6 1.7 6.5 1.7 H74" fill="none" stroke="#ecd0a8" stroke-width="0.9"/></svg>
<svg style="position:absolute;left:231px;top:156px" width="15" height="14" viewBox="0 0 15 14"><rect x="0" y="0" width="15" height="14" fill="#fff"/><rect x="0" y="0" width="15" height="3" fill="#c4406c"/><path d="M1.2 1.3 H13.8" stroke="#e7a0b8" stroke-width="0.9"/><path d="M0.45 3 V13.5" stroke="#a9b6cc" stroke-width="0.9"/><path d="M14.55 3 V13.55 H0" fill="none" stroke="#2b3f5e" stroke-width="0.9"/><path d="M2.3 4.5 H6" stroke="#5a6e98" stroke-width="0.9"/><path d="M2.3 8.5 H6" stroke="#5a6e98" stroke-width="0.9"/><rect x="7.5" y="4.6" width="4.5" height="2.2" fill="#fff" stroke="#4d5f86" stroke-width="0.9"/><rect x="7.5" y="8.6" width="4.5" height="2.2" fill="#fff" stroke="#4d5f86" stroke-width="0.9"/></svg>
<svg style="position:absolute;left:1264px;top:160px" width="8" height="8" viewBox="0 0 8 8"><path d="M0.5 0.5 L7.5 7.5 M7.5 0.5 L0.5 7.5" stroke="#333" stroke-width="1.4"/></svg>
<div style="position:absolute;left:225px;top:176px;width:1055px;height:66.5px;background:#c6d9f0"></div>
<div style="position:absolute;left:225px;top:242px;width:19px;height:741px;background:#fff;border-top:1px solid #000;border-right:1px solid #000"></div>
<svg style="position:absolute;left:233px;top:246px" width="7" height="11" viewBox="0 0 7 11"><path d="M0 0 L7 5.5 L0 11Z" fill="#000"/></svg>
<div style="position:absolute;left:436px;top:266px;width:114px;height:22px;background:#fff;border:1px solid #a6a6a6"></div>
<div style="position:absolute;left:436px;top:292px;width:159px;height:23px;background:#fff;border:1px solid #a6a6a6"></div>
<div style="position:absolute;left:436px;top:319px;width:125px;height:23px;background:#fff;border:1px solid #a6a6a6"></div>
<div style="position:absolute;left:436px;top:345px;width:159px;height:23px;background:#fff;border:1px solid #a6a6a6"></div>
<div style="position:absolute;left:436px;top:372px;width:160px;height:23px;background:#fff;border:1px solid #a6a6a6"></div>
<div style="position:absolute;left:262px;top:428px;width:440px;height:231px;background:#fff;border:1px solid #a5a5a5"></div>
<div style="position:absolute;left:263px;top:429px;width:438px;height:20px;background:#dfe3e8"></div>
<div style="position:absolute;left:282px;top:448px;width:419px;height:1px;background:#ebe6dc"></div>
<div style="position:absolute;left:394px;top:429px;width:1px;height:20px;background:#b9bdc3"></div>
<div style="position:absolute;left:502px;top:429px;width:1px;height:20px;background:#b9bdc3"></div>
<svg style="position:absolute;left:266px;top:432px" width="14" height="13" viewBox="0 0 14 13"><path d="M13 0 V13 H0Z" fill="#eceef1"/><path d="M13 0 L0 13" stroke="#c9ccd1" stroke-width="1"/></svg>
<svg style="position:absolute;left:383px;top:438px" width="6" height="3" viewBox="0 0 6 3"><path d="M0 0 H6 L3 3Z" fill="#333"/></svg>
<svg style="position:absolute;left:490.5px;top:438px" width="6" height="3" viewBox="0 0 6 3"><path d="M0 0 H6 L3 3Z" fill="#333"/></svg>
<svg style="position:absolute;left:690.5px;top:438px" width="6" height="3" viewBox="0 0 6 3"><path d="M0 0 H6 L3 3Z" fill="#333"/></svg>
<div style="position:absolute;left:282px;top:449px;width:419px;height:20px;background:#ffffff"></div>
<div style="position:absolute;left:263px;top:448px;width:19px;height:21px;background:#dfe2e7;border-bottom:1px solid #a7abb2;border-right:1px solid #a7abb2"></div>
<div style="position:absolute;left:282px;top:469px;width:419px;height:20px;background:#f2f2f2"></div>
<div style="position:absolute;left:263px;top:469px;width:19px;height:20px;background:#dfe2e7;border-bottom:1px solid #a7abb2;border-right:1px solid #a7abb2"></div>
<div style="position:absolute;left:282px;top:489px;width:419px;height:20px;background:#ffffff"></div>
<div style="position:absolute;left:263px;top:489px;width:19px;height:20px;background:#dfe2e7;border-bottom:1px solid #a7abb2;border-right:1px solid #a7abb2"></div>
<div style="position:absolute;left:282px;top:509px;width:419px;height:20px;background:#f2f2f2"></div>
<div style="position:absolute;left:263px;top:509px;width:19px;height:20px;background:#dfe2e7;border-bottom:1px solid #a7abb2;border-right:1px solid #a7abb2"></div>
<div style="position:absolute;left:395px;top:449px;width:306px;height:19px;background:#a6caf0"></div>
<div style="position:absolute;left:263px;top:529px;width:19px;height:111px;background:#f4f6fb;border-right:1px solid #e4e6ea"></div>
<div style="position:absolute;left:282px;top:468px;width:419px;height:1px;background:#ebe6dc"></div>
<div style="position:absolute;left:282px;top:488px;width:419px;height:1px;background:#ebe6dc"></div>
<div style="position:absolute;left:282px;top:508px;width:419px;height:1px;background:#ebe6dc"></div>
<div style="position:absolute;left:282px;top:528px;width:419px;height:1px;background:#ebe6dc"></div>
<div style="position:absolute;left:282px;top:548px;width:419px;height:1px;background:#f4f2ec"></div>
<div style="position:absolute;left:282px;top:568px;width:419px;height:1px;background:#f4f2ec"></div>
<div style="position:absolute;left:282px;top:588px;width:419px;height:1px;background:#f4f2ec"></div>
<div style="position:absolute;left:282px;top:608px;width:419px;height:1px;background:#f4f2ec"></div>
<div style="position:absolute;left:282px;top:628px;width:419px;height:1px;background:#f4f2ec"></div>
<div style="position:absolute;left:394px;top:449px;width:1px;height:80px;background:#e6e2d8"></div>
<div style="position:absolute;left:394px;top:529px;width:1px;height:111px;background:#f4f2ec"></div>
<div style="position:absolute;left:502px;top:449px;width:1px;height:80px;background:#e6e2d8"></div>
<div style="position:absolute;left:502px;top:529px;width:1px;height:111px;background:#f4f2ec"></div>
<svg style="position:absolute;left:267.5px;top:513.5px" width="10" height="10" viewBox="0 0 10 10"><path d="M5 0.5 V9.5 M1 2.7 L9 7.3 M9 2.7 L1 7.3" stroke="#111" stroke-width="1.3"/></svg>
<div style="position:absolute;left:263px;top:640px;width:438px;height:18px;background:linear-gradient(#f3f4f6 0,#f3f4f6 50%,#e5e7ea 50%,#e5e7ea 100%);border-top:1px solid #a9adb3"></div>
<svg style="position:absolute;left:314.5px;top:646px" width="8" height="8" viewBox="0 0 8 8"><rect x="0" y="0" width="1.6" height="8" fill="#333"/><path d="M7.5 0 V8 L2 4Z" fill="#333"/></svg>
<svg style="position:absolute;left:333px;top:646px" width="5" height="8" viewBox="0 0 5 8"><path d="M4.5 0 V8 L0 4Z" fill="#b0b0b0"/></svg>
<div style="position:absolute;left:343px;top:642px;width:50px;height:16px;background:#fff;border:1px solid #9a9a9a"></div>
<svg style="position:absolute;left:401.5px;top:646px" width="5" height="8" viewBox="0 0 5 8"><path d="M0 0 V8 L4.5 4Z" fill="#333"/></svg>
<svg style="position:absolute;left:417.5px;top:646px" width="7" height="8" viewBox="0 0 7 8"><path d="M0 0 V8 L5 4Z" fill="#333"/><rect x="5.4" y="0" width="1.6" height="8" fill="#333"/></svg>
<svg style="position:absolute;left:432px;top:646px" width="14" height="9" viewBox="0 0 14 9"><path d="M0 0 V8 L4.5 4Z" fill="#333"/><g stroke="#eab420" stroke-width="1.2"><path d="M9 0.5 V7.5 M5.5 4 H12.5 M6.4 1.4 L11.6 6.6 M11.6 1.4 L6.4 6.6"/></g><circle cx="9" cy="4" r="1.1" fill="#fff6d0"/></svg>
<div style="position:absolute;left:450px;top:641px;width:1px;height:17px;background:#c8ccd2"></div>
<svg style="position:absolute;left:459px;top:643px" width="15" height="15" viewBox="0 0 15 15"><path d="M0 0 H11 L7 5 V11 H4 V5Z" fill="#b8b8b8"/><path d="M7 8 L14 15 M14 8 L7 15" stroke="#b0b0b0" stroke-width="1.3"/></svg>
<div style="position:absolute;left:554px;top:641px;width:1px;height:17px;background:#c8ccd2"></div>
<div style="position:absolute;left:560px;top:642px;width:70px;height:16px;background:#fff;border:1px solid #a6a6a6"></div>
<div style="position:absolute;left:653px;top:641px;width:1px;height:17px;background:#c8ccd2"></div>
<div style="position:absolute;left:656px;top:642.5px;width:42.5px;height:14px;background:#fff;border:1px solid #a6a6a6"></div>
<div style="position:absolute;left:670px;top:643px;width:1px;height:13px;background:#a6a6a6"></div>
<div style="position:absolute;left:683.5px;top:643px;width:1px;height:13px;background:#a6a6a6"></div>
<svg style="position:absolute;left:660px;top:645.5px" width="5" height="8" viewBox="0 0 5 8"><path d="M4.5 0 V8 L0 4Z" fill="#555"/></svg>
<svg style="position:absolute;left:688px;top:645.5px" width="5" height="8" viewBox="0 0 5 8"><path d="M0 0 V8 L4.5 4Z" fill="#555"/></svg>
<div style="position:absolute;left:319px;top:697px;width:39px;height:38px;background:linear-gradient(#e6edf9,#bad2f0);border:1px solid #8fb0dc;border-radius:3px"></div>
<div style="position:absolute;left:357px;top:697px;width:38px;height:38px;background:linear-gradient(#e6edf9,#bad2f0);border:1px solid #8fb0dc;border-radius:3px"></div>
<div style="position:absolute;left:395px;top:697px;width:38px;height:38px;background:linear-gradient(#e6edf9,#bad2f0);border:1px solid #8fb0dc;border-radius:3px"></div>
<div style="position:absolute;left:432px;top:697px;width:39px;height:38px;background:linear-gradient(#e6edf9,#bad2f0);border:1px solid #8fb0dc;border-radius:3px"></div>
<svg style="position:absolute;left:332px;top:710px" width="13" height="12" viewBox="0 0 13 12"><rect x="0" y="0" width="3.5" height="12" fill="#4a7ebb"/><path d="M12.3 0 V12 L3.5 6Z" fill="#4a7ebb"/></svg>
<svg style="position:absolute;left:371px;top:710px" width="8" height="12" viewBox="0 0 8 12"><path d="M8 0 V12 L0 6Z" fill="#4a7ebb"/></svg>
<svg style="position:absolute;left:409px;top:710px" width="8" height="12" viewBox="0 0 8 12"><path d="M0 0 V12 L8 6Z" fill="#4a7ebb"/></svg>
<svg style="position:absolute;left:444.8px;top:710px" width="13" height="12" viewBox="0 0 13 12"><path d="M0 0 V12 L8.4 6Z" fill="#4a7ebb"/><rect x="8.4" y="0" width="3.8" height="12" fill="#4a7ebb"/></svg>
<div style="position:absolute;left:772px;top:697px;width:40px;height:39px;background:linear-gradient(#e6edf9,#bad2f0);border:1px solid #8fb0dc;border-radius:3px"></div>
<svg style="position:absolute;left:783.8px;top:707.8px" width="17" height="17" viewBox="0 0 17 17"><path d="M0 2.3 L7.4 0 V16.2 L0 13.8Z" fill="#e8bf7a"/><path d="M7.4 2.2 H11 V4 M11 12 V13.8 H7.4" fill="none" stroke="#e8bf7a" stroke-width="1.6"/><rect x="7.4" y="3" width="3.2" height="11" fill="#fff"/><rect x="3" y="7.3" width="1.5" height="1.5" fill="#fff"/><path d="M9 8.1 L13 5 V7 H16.2 V9.4 H13 V11.2Z" fill="#4a7ebb"/></svg>
<div style="position:absolute;left:225px;top:982px;width:1055px;height:19px;background:linear-gradient(#f3f4f6 0,#f3f4f6 52%,#e6e7ea 52%,#e6e7ea 100%);border-top:1px solid #a9adb3;border-bottom:1px solid #b8bcc2"></div>
<div style="position:absolute;left:1279px;top:982px;width:1px;height:19px;background:#b8bcc2"></div>
<svg style="position:absolute;left:276.7px;top:988px" width="7" height="7.5" viewBox="0 0 7 7.5"><rect x="0" y="0" width="1.5" height="7.5" fill="#333"/><path d="M7 0 V7.5 L2 3.75Z" fill="#333"/></svg>
<svg style="position:absolute;left:294.7px;top:988px" width="5" height="7.5" viewBox="0 0 5 7.5"><path d="M4.7 0 V7.5 L0 3.75Z" fill="#333"/></svg>
<div style="position:absolute;left:305px;top:984px;width:50px;height:16px;background:#fff;border:1px solid #a6a6a6"></div>
<svg style="position:absolute;left:363.4px;top:988px" width="5" height="7.5" viewBox="0 0 5 7.5"><path d="M0 0 V7.5 L4.7 3.75Z" fill="#333"/></svg>
<svg style="position:absolute;left:379.8px;top:988px" width="7" height="7.5" viewBox="0 0 7 7.5"><path d="M0 0 V7.5 L5 3.75Z" fill="#333"/><rect x="5.4" y="0" width="1.5" height="7.5" fill="#333"/></svg>
<svg style="position:absolute;left:394px;top:988px" width="14" height="9" viewBox="0 0 14 9"><path d="M0 0 V7.5 L4.5 3.75Z" fill="#333"/><g stroke="#eab420" stroke-width="1.2"><path d="M8.8 0.25 V7.25 M5.300000000000001 3.75 H12.3 M6.200000000000001 1.15 L11.4 6.35 M11.4 1.15 L6.200000000000001 6.35"/></g><circle cx="8.8" cy="3.75" r="1.1" fill="#fff6d0"/></svg>
<div style="position:absolute;left:412px;top:983px;width:1px;height:17px;background:#c8ccd2"></div>
<svg style="position:absolute;left:420.5px;top:985px" width="15" height="15" viewBox="0 0 15 15"><path d="M0 0 H11 L7 5 V11 H4 V5Z" fill="#b8b8b8"/><path d="M7 8 L14 15 M14 8 L7 15" stroke="#b0b0b0" stroke-width="1.3"/></svg>
<div style="position:absolute;left:516px;top:983px;width:1px;height:17px;background:#c8ccd2"></div>
<div style="position:absolute;left:522px;top:984px;width:70px;height:16px;background:#fff;border:1px solid #a6a6a6"></div>
<div style="position:absolute;left:0px;top:1001px;width:1280px;height:21px;background:#f1f1f1"></div>
<div style="position:absolute;left:3px;top:1000px;width:218px;height:1px;background:#a9b1bd"></div>
<div style="position:absolute;left:1165px;top:1001px;width:38px;height:21px;background:#c6c6c6"></div>
<svg style="position:absolute;left:1177px;top:1004.7px" width="14" height="13" viewBox="0 0 14 13"><rect x="0.5" y="0.5" width="13" height="12" fill="none" stroke="#555" stroke-width="1"/><rect x="0.5" y="0.5" width="13" height="3" fill="#555"/><path d="M2.5 6.5 H6 M2.5 9.5 H6" stroke="#555" stroke-width="1.2"/><rect x="7.5" y="5.5" width="4.5" height="2.2" fill="#555"/><rect x="7.5" y="8.7" width="4.5" height="2.2" fill="#555"/></svg>
<svg style="position:absolute;left:1216px;top:1005px" width="12" height="13" viewBox="0 0 12 13"><path d="M0 0.5 H12 M0 12.5 H12 M1.5 0.5 V12.5 M10.5 0.5 V12.5" stroke="#555" stroke-width="1"/><path d="M0 6.5 H1.5 M10.5 6.5 H12" stroke="#555"/><path d="M2 3.5 H5 M2 8.5 H5" stroke="#555"/><rect x="5" y="3" width="4.5" height="2" fill="#555"/><rect x="5" y="7.5" width="4.5" height="2" fill="#555"/></svg>
<svg style="position:absolute;left:1253px;top:1005px" width="15" height="13" viewBox="0 0 15 13"><path d="M0.8 7.5 V0.8 L5.5 6.2 M0.8 7.2 H4 M0.8 4.5 H2.5" fill="none" stroke="#555" stroke-width="1.1"/><path d="M6.2 7.5 L12.5 1.2" stroke="#555" stroke-width="2.6"/><path d="M6.6 7 L11.8 1.8" stroke="#f1f1f1" stroke-width="0.8"/><rect x="1.5" y="9.2" width="12" height="3.3" fill="#fff" stroke="#555" stroke-width="1"/><path d="M4.5 9.2 V10.5 M7.5 9.2 V10.5 M10.5 9.2 V10.5" stroke="#555" stroke-width="1"/></svg>
<div style="position:absolute;left:0px;top:1022px;width:1280px;height:2px;background:#1f1f1f"></div>
<div style="position:absolute;left:442px;top:1022px;width:48px;height:2px;background:#555"></div>
<span class="t" style="left:274.20px;top:11.86px;font-family:'Liberation Sans', sans-serif;font-size:12.8px;line-height:1;color:#ffffff;letter-spacing:0.15px;transform:scaleX(0.8919);transform-origin:0 0;">ИСИТ А 2-4 лр : база данных- G:\ИСИТ\ИСИТ А 2-4 лр.accdb (Формат файлов Access 2007–2016) - Access (Сбой активации продукта)</span>
<span class="t" style="left:1116.00px;top:9.00px;font-family:'Liberation Sans', sans-serif;font-size:13px;line-height:1;color:#ffffff;letter-spacing:0.2px;">?</span>
<span class="t" style="left:15.00px;top:41.04px;font-family:'Liberation Sans', sans-serif;font-size:12px;line-height:1;color:#ffffff;letter-spacing:0.35px;transform:scaleX(0.9491);transform-origin:0 0;">Файл</span>
<span class="t" style="left:76.50px;top:41.04px;font-family:'Liberation Sans', sans-serif;font-size:12px;line-height:1;color:#a4373a;letter-spacing:0.35px;transform:scaleX(0.9001);transform-origin:0 0;">Главная</span>
<span class="t" style="left:149.30px;top:41.04px;font-family:'Liberation Sans', sans-serif;font-size:12px;line-height:1;color:#ffffff;letter-spacing:0.35px;transform:scaleX(0.9189);transform-origin:0 0;">Создание</span>
<span class="t" style="left:230.30px;top:41.04px;font-family:'Liberation Sans', sans-serif;font-size:12px;line-height:1;color:#ffffff;letter-spacing:0.35px;transform:scaleX(0.9401);transform-origin:0 0;">Внешние данные</span>
<span class="t" style="left:354.50px;top:41.04px;font-family:'Liberation Sans', sans-serif;font-size:12px;line-height:1;color:#ffffff;letter-spacing:0.35px;transform:scaleX(0.9152);transform-origin:0 0;">Работа с базами данных</span>
<span class="t" style="left:533.00px;top:41.04px;font-family:'Liberation Sans', sans-serif;font-size:12px;line-height:1;color:#e6c3c4;letter-spacing:0.35px;transform:scaleX(0.8999);transform-origin:0 0;">Что вы хотите сделать?</span>
<span class="t" style="left:1177.00px;top:41.04px;font-family:'Liberation Sans', sans-serif;font-size:12px;line-height:1;color:#ffffff;letter-spacing:0.35px;transform:scaleX(0.9165);transform-origin:0 0;">ysveta99@mail.ru</span>
<span class="t" style="left:3.50px;top:136.84px;font-family:'Liberation Sans', sans-serif;font-size:12px;line-height:1;color:#444444;letter-spacing:0.35px;transform:scaleX(0.9075);transform-origin:0 0;">Режимы</span>
<span class="t" style="left:104.50px;top:136.84px;font-family:'Liberation Sans', sans-serif;font-size:12px;line-height:1;color:#444444;letter-spacing:0.35px;transform:scaleX(0.8899);transform-origin:0 0;">Буфер обмена</span>
<span class="t" style="left:351.30px;top:136.84px;font-family:'Liberation Sans', sans-serif;font-size:12px;line-height:1;color:#444444;letter-spacing:0.35px;transform:scaleX(0.9281);transform-origin:0 0;">Сортировка и фильтр</span>
<span class="t" style="left:691.20px;top:136.84px;font-family:'Liberation Sans', sans-serif;font-size:12px;line-height:1;color:#444444;letter-spacing:0.35px;transform:scaleX(0.9017);transform-origin:0 0;">Записи</span>
<span class="t" style="left:901.00px;top:136.84px;font-family:'Liberation Sans', sans-serif;font-size:12px;line-height:1;color:#444444;letter-spacing:0.35px;transform:scaleX(0.9060);transform-origin:0 0;">Найти</span>
<span class="t" style="left:1035.80px;top:136.84px;font-family:'Liberation Sans', sans-serif;font-size:12px;line-height:1;color:#444444;letter-spacing:0.35px;transform:scaleX(0.9052);transform-origin:0 0;">Форматирование текста</span>
<span class="t" style="left:6.25px;top:101.64px;font-family:'Liberation Sans', sans-serif;font-size:12px;line-height:1;color:#444444;letter-spacing:0.35px;transform:scaleX(0.9766);transform-origin:0 0;">Режим</span>
<span class="t" style="left:58.60px;top:101.84px;font-family:'Liberation Sans', sans-serif;font-size:12px;line-height:1;color:#444444;letter-spacing:0.35px;transform:scaleX(0.8814);transform-origin:0 0;">Вставить</span>
<span class="t" style="left:131.00px;top:67.84px;font-family:'Liberation Sans', sans-serif;font-size:12px;line-height:1;color:#a6a6a6;letter-spacing:0.35px;transform:scaleX(0.8955);transform-origin:0 0;">Вырезать</span>
<span class="t" style="left:131.00px;top:90.44px;font-family:'Liberation Sans', sans-serif;font-size:12px;line-height:1;color:#a6a6a6;letter-spacing:0.35px;transform:scaleX(0.9443);transform-origin:0 0;">Копировать</span>
<span class="t" style="left:131.00px;top:113.84px;font-family:'Liberation Sans', sans-serif;font-size:12px;line-height:1;color:#a6a6a6;letter-spacing:0.35px;transform:scaleX(0.9513);transform-origin:0 0;">Формат по образцу</span>
<span class="t" style="left:257.20px;top:101.84px;font-family:'Liberation Sans', sans-serif;font-size:12px;line-height:1;color:#a6a6a6;letter-spacing:0.35px;transform:scaleX(0.9626);transform-origin:0 0;">Фильтр</span>
<span class="t" style="left:323.50px;top:67.84px;font-family:'Liberation Sans', sans-serif;font-size:12px;line-height:1;color:#a6a6a6;letter-spacing:0.35px;transform:scaleX(0.9477);transform-origin:0 0;">По возрастанию</span>
<span class="t" style="left:323.50px;top:90.44px;font-family:'Liberation Sans', sans-serif;font-size:12px;line-height:1;color:#a6a6a6;letter-spacing:0.35px;transform:scaleX(0.9617);transform-origin:0 0;">По убыванию</span>
<span class="t" style="left:323.00px;top:113.84px;font-family:'Liberation Sans', sans-serif;font-size:12px;line-height:1;color:#a6a6a6;letter-spacing:0.35px;transform:scaleX(0.9402);transform-origin:0 0;">Удалить сортировку</span>
<span class="t" style="left:463.50px;top:67.84px;font-family:'Liberation Sans', sans-serif;font-size:12px;line-height:1;color:#a6a6a6;letter-spacing:0.35px;transform:scaleX(0.9096);transform-origin:0 0;">Выделение</span>
<span class="t" style="left:463.50px;top:90.44px;font-family:'Liberation Sans', sans-serif;font-size:12px;line-height:1;color:#262626;letter-spacing:0.35px;transform:scaleX(0.9606);transform-origin:0 0;">Дополнительно</span>
<span class="t" style="left:463.50px;top:113.84px;font-family:'Liberation Sans', sans-serif;font-size:12px;line-height:1;color:#a6a6a6;letter-spacing:0.35px;transform:scaleX(0.9436);transform-origin:0 0;">Фильтр</span>
<span class="t" style="left:577.20px;top:101.84px;font-family:'Liberation Sans', sans-serif;font-size:12px;line-height:1;color:#444444;letter-spacing:0.35px;transform:scaleX(0.9421);transform-origin:0 0;">Обновить</span>
<span class="t" style="left:591.50px;top:117.84px;font-family:'Liberation Sans', sans-serif;font-size:12px;line-height:1;color:#444444;letter-spacing:0.35px;transform:scaleX(0.8920);transform-origin:0 0;">все</span>
<span class="t" style="left:656.00px;top:67.54px;font-family:'Liberation Sans', sans-serif;font-size:12px;line-height:1;color:#262626;letter-spacing:0.35px;transform:scaleX(0.8949);transform-origin:0 0;">Создать</span>
<span class="t" style="left:656.00px;top:90.64px;font-family:'Liberation Sans', sans-serif;font-size:12px;line-height:1;color:#262626;letter-spacing:0.35px;transform:scaleX(0.9290);transform-origin:0 0;">Сохранить</span>
<span class="t" style="left:656.00px;top:113.84px;font-family:'Liberation Sans', sans-serif;font-size:12px;line-height:1;color:#a6a6a6;letter-spacing:0.35px;transform:scaleX(0.9099);transform-origin:0 0;">Удалить</span>
<span class="t" style="left:743.30px;top:67.84px;font-family:'Liberation Sans', sans-serif;font-size:12px;line-height:1;color:#a6a6a6;letter-spacing:0.35px;transform:scaleX(0.9774);transform-origin:0 0;">Итоги</span>
<span class="t" style="left:743.30px;top:90.64px;font-family:'Liberation Sans', sans-serif;font-size:12px;line-height:1;color:#262626;letter-spacing:0.35px;transform:scaleX(0.9332);transform-origin:0 0;">Орфография</span>
<span class="t" style="left:743.30px;top:113.84px;font-family:'Liberation Sans', sans-serif;font-size:12px;line-height:1;color:#a6a6a6;letter-spacing:0.35px;transform:scaleX(0.9628);transform-origin:0 0;">Дополнительно</span>
<span class="t" style="left:859.40px;top:101.84px;font-family:'Liberation Sans', sans-serif;font-size:12px;line-height:1;color:#444444;letter-spacing:0.35px;transform:scaleX(0.9425);transform-origin:0 0;">Найти</span>
<span class="t" style="left:918.90px;top:67.84px;font-family:'Liberation Sans', sans-serif;font-size:12px;line-height:1;color:#262626;letter-spacing:0.35px;transform:scaleX(0.9347);transform-origin:0 0;">Заменить</span>
<span class="t" style="left:918.90px;top:90.64px;font-family:'Liberation Sans', sans-serif;font-size:12px;line-height:1;color:#262626;letter-spacing:0.35px;transform:scaleX(0.9466);transform-origin:0 0;">Перейти</span>
<span class="t" style="left:918.90px;top:113.84px;font-family:'Liberation Sans', sans-serif;font-size:12px;line-height:1;color:#262626;letter-spacing:0.35px;transform:scaleX(0.9317);transform-origin:0 0;">Выбрать</span>
<span class="t" style="left:995.00px;top:90.34px;font-family:'Liberation Sans', sans-serif;font-size:12px;line-height:1;color:#a8a8a8;font-weight:bold;letter-spacing:0.35px;transform:scaleX(1.1057);transform-origin:0 0;">Ж</span>
<span class="t" style="left:1018.00px;top:90.34px;font-family:'Liberation Sans', sans-serif;font-size:12px;line-height:1;color:#a8a8a8;font-weight:bold;font-style:italic;letter-spacing:0.35px;transform:scaleX(1.2188);transform-origin:0 0;">К</span>
<span class="t" style="left:1040.00px;top:90.34px;font-family:'Liberation Sans', sans-serif;font-size:12px;line-height:1;color:#a8a8a8;font-weight:bold;letter-spacing:0.35px;transform:scaleX(1.1247);transform-origin:0 0;">Ч</span>
<span class="t" style="left:996.00px;top:113.84px;font-family:'Liberation Sans', sans-serif;font-size:12px;line-height:1;color:#a8a8a8;letter-spacing:0.35px;transform:scaleX(1.2485);transform-origin:0 0;">A</span>
<span class="t" style="left:8.00px;top:160.02px;font-family:'Liberation Sans', sans-serif;font-size:21px;line-height:1;color:#a4373a;transform:scaleX(0.9562);transform-origin:0 0;">Все объекты Ac...</span>
<span class="t" style="left:8.50px;top:189.84px;font-family:'Liberation Sans', sans-serif;font-size:12px;line-height:1;color:#1a1a1a;font-style:italic;letter-spacing:0.35px;transform:scaleX(0.7581);transform-origin:0 0;">Поиск...</span>
<span class="t" style="left:13.75px;top:210.84px;font-family:'Liberation Sans', sans-serif;font-size:12px;line-height:1;color:#4a4a4a;font-weight:bold;letter-spacing:0.35px;transform:scaleX(1.0134);transform-origin:0 0;">Таблицы</span>
<span class="t" style="left:43.30px;top:231.94px;font-family:'Liberation Sans', sans-serif;font-size:12px;line-height:1;color:#444444;letter-spacing:0.35px;transform:scaleX(0.9084);transform-origin:0 0;">Запись клиентов</span>
<span class="t" style="left:43.30px;top:255.94px;font-family:'Liberation Sans', sans-serif;font-size:12px;line-height:1;color:#444444;letter-spacing:0.35px;transform:scaleX(0.8860);transform-origin:0 0;">Клиенты</span>
<span class="t" style="left:43.30px;top:279.94px;font-family:'Liberation Sans', sans-serif;font-size:12px;line-height:1;color:#444444;letter-spacing:0.35px;transform:scaleX(0.9132);transform-origin:0 0;">Копия Запись клиентов</span>
<span class="t" style="left:43.30px;top:303.94px;font-family:'Liberation Sans', sans-serif;font-size:12px;line-height:1;color:#444444;letter-spacing:0.35px;transform:scaleX(0.9469);transform-origin:0 0;">Стрижки</span>
<span class="t" style="left:43.30px;top:327.94px;font-family:'Liberation Sans', sans-serif;font-size:12px;line-height:1;color:#444444;letter-spacing:0.35px;transform:scaleX(0.8470);transform-origin:0 0;">Услуга</span>
<span class="t" style="left:13.75px;top:348.84px;font-family:'Liberation Sans', sans-serif;font-size:12px;line-height:1;color:#4a4a4a;font-weight:bold;letter-spacing:0.35px;transform:scaleX(1.0277);transform-origin:0 0;">Запросы</span>
<span class="t" style="left:43.00px;top:370.24px;font-family:'Liberation Sans', sans-serif;font-size:12px;line-height:1;color:#444444;letter-spacing:0.35px;transform:scaleX(0.8944);transform-origin:0 0;">2 Запрос Какая стрижка у кли...</span>
<span class="t" style="left:43.00px;top:394.24px;font-family:'Liberation Sans', sans-serif;font-size:12px;line-height:1;color:#444444;letter-spacing:0.35px;transform:scaleX(0.9220);transform-origin:0 0;">2 Запрос ноябрь</span>
<span class="t" style="left:43.00px;top:418.24px;font-family:'Liberation Sans', sans-serif;font-size:12px;line-height:1;color:#444444;letter-spacing:0.35px;transform:scaleX(0.8735);transform-origin:0 0;">2 Запрос Фамилия на К или Я,...</span>
<span class="t" style="left:43.00px;top:442.24px;font-family:'Liberation Sans', sans-serif;font-size:12px;line-height:1;color:#444444;letter-spacing:0.35px;transform:scaleX(0.9248);transform-origin:0 0;">2 Стрижки &lt;2000</span>
<span class="t" style="left:43.00px;top:466.24px;font-family:'Liberation Sans', sans-serif;font-size:12px;line-height:1;color:#444444;letter-spacing:0.35px;transform:scaleX(0.8888);transform-origin:0 0;">3 Запрос Общая сумма потра...</span>
<span class="t" style="left:43.00px;top:490.24px;font-family:'Liberation Sans', sans-serif;font-size:12px;line-height:1;color:#444444;letter-spacing:0.35px;transform:scaleX(0.9108);transform-origin:0 0;">3 Запрос на добавление</span>
<span class="t" style="left:43.00px;top:514.24px;font-family:'Liberation Sans', sans-serif;font-size:12px;line-height:1;color:#444444;letter-spacing:0.35px;transform:scaleX(0.9117);transform-origin:0 0;">3 Запрос на обновление скид...</span>
<span class="t" style="left:43.00px;top:538.24px;font-family:'Liberation Sans', sans-serif;font-size:12px;line-height:1;color:#444444;letter-spacing:0.35px;transform:scaleX(0.8890);transform-origin:0 0;">3 Запрос на удаление</span>
<span class="t" style="left:43.00px;top:562.24px;font-family:'Liberation Sans', sans-serif;font-size:12px;line-height:1;color:#444444;letter-spacing:0.35px;transform:scaleX(0.8978);transform-origin:0 0;">3 Запрос Популярность стри...</span>
<span class="t" style="left:13.75px;top:582.34px;font-family:'Liberation Sans', sans-serif;font-size:12px;line-height:1;color:#4a4a4a;font-weight:bold;letter-spacing:0.35px;transform:scaleX(0.9939);transform-origin:0 0;">Формы</span>
<span class="t" style="left:43.30px;top:603.64px;font-family:'Liberation Sans', sans-serif;font-size:12px;line-height:1;color:#444444;letter-spacing:0.35px;transform:scaleX(0.9187);transform-origin:0 0;">Клиенты ленточный</span>
<span class="t" style="left:43.30px;top:627.64px;font-family:'Liberation Sans', sans-serif;font-size:12px;line-height:1;color:#333;letter-spacing:0.35px;transform:scaleX(0.9187);transform-origin:0 0;">Клиенты табличный</span>
<span class="t" style="left:43.30px;top:651.64px;font-family:'Liberation Sans', sans-serif;font-size:12px;line-height:1;color:#444444;letter-spacing:0.35px;transform:scaleX(0.8976);transform-origin:0 0;">Услуга в один столбец</span>
<span class="t" style="left:43.30px;top:675.64px;font-family:'Liberation Sans', sans-serif;font-size:12px;line-height:1;color:#444444;letter-spacing:0.35px;transform:scaleX(0.9169);transform-origin:0 0;">Услуга подчиненная форма</span>
<span class="t" style="left:43.30px;top:699.64px;font-family:'Liberation Sans', sans-serif;font-size:12px;line-height:1;color:#444444;letter-spacing:0.35px;transform:scaleX(0.9120);transform-origin:0 0;">Услуга подчиненная форма1</span>
<span class="t" style="left:255.25px;top:157.59px;font-family:'Liberation Sans', sans-serif;font-size:12px;line-height:1;color:#a4262c;font-weight:bold;letter-spacing:0.35px;transform:scaleX(0.8682);transform-origin:0 0;">Клиенты</span>
<span class="t" style="left:247.80px;top:184.58px;font-family:'Liberation Sans', sans-serif;font-size:24px;line-height:1;color:#7f7f7f;transform:scaleX(1.0329);transform-origin:0 0;">Клиенты</span>
<span class="t" style="left:266.20px;top:269.20px;font-family:'Liberation Sans', sans-serif;font-size:13px;line-height:1;color:#7f7f7f;letter-spacing:0.2px;transform:scaleX(1.0273);transform-origin:0 0;">КодКлиента</span>
<span class="t" style="left:266.20px;top:294.70px;font-family:'Liberation Sans', sans-serif;font-size:13px;line-height:1;color:#7f7f7f;letter-spacing:0.2px;transform:scaleX(1.0158);transform-origin:0 0;">Фамилия</span>
<span class="t" style="left:266.20px;top:321.70px;font-family:'Liberation Sans', sans-serif;font-size:13px;line-height:1;color:#7f7f7f;letter-spacing:0.2px;transform:scaleX(1.0108);transform-origin:0 0;">Имя</span>
<span class="t" style="left:266.20px;top:347.80px;font-family:'Liberation Sans', sans-serif;font-size:13px;line-height:1;color:#7f7f7f;letter-spacing:0.2px;transform:scaleX(0.9927);transform-origin:0 0;">Отчество</span>
<span class="t" style="left:266.20px;top:374.30px;font-family:'Liberation Sans', sans-serif;font-size:13px;line-height:1;color:#7f7f7f;letter-spacing:0.2px;transform:scaleX(1.0065);transform-origin:0 0;">Телефон</span>
<span class="t" style="left:541.00px;top:269.80px;font-family:'Liberation Sans', sans-serif;font-size:13px;line-height:1;color:#262626;letter-spacing:0.2px;-webkit-text-stroke:0.25px #262626;transform:scaleX(0.9672);transform-origin:0 0;">4</span>
<span class="t" style="left:438.40px;top:296.00px;font-family:'Liberation Sans', sans-serif;font-size:13px;line-height:1;color:#262626;letter-spacing:0.2px;-webkit-text-stroke:0.25px #262626;transform:scaleX(1.0054);transform-origin:0 0;">Фотина</span>
<span class="t" style="left:438.40px;top:323.00px;font-family:'Liberation Sans', sans-serif;font-size:13px;line-height:1;color:#262626;letter-spacing:0.2px;-webkit-text-stroke:0.25px #262626;">Майя</span>
<span class="t" style="left:438.40px;top:348.50px;font-family:'Liberation Sans', sans-serif;font-size:13px;line-height:1;color:#262626;letter-spacing:0.2px;-webkit-text-stroke:0.25px #262626;transform:scaleX(0.9755);transform-origin:0 0;">Яновна</span>
<span class="t" style="left:438.40px;top:375.70px;font-family:'Liberation Sans', sans-serif;font-size:13px;line-height:1;color:#262626;letter-spacing:0.2px;-webkit-text-stroke:0.25px #262626;transform:scaleX(0.9624);transform-origin:0 0;">+7(257)832-53-24</span>
<span class="t" style="left:267.30px;top:406.26px;font-family:'Liberation Sans', sans-serif;font-size:16px;line-height:1;color:#ed1c24;transform:scaleX(1.0792);transform-origin:0 0;">Услуги</span>
<span class="t" style="left:298.50px;top:432.00px;font-family:'Liberation Sans', sans-serif;font-size:13px;line-height:1;color:#333;letter-spacing:0.2px;-webkit-text-stroke:0.25px #333;transform:scaleX(1.0127);transform-origin:0 0;">КодУслуги</span>
<span class="t" style="left:426.25px;top:432.00px;font-family:'Liberation Sans', sans-serif;font-size:13px;line-height:1;color:#333;letter-spacing:0.2px;-webkit-text-stroke:0.25px #333;transform:scaleX(0.9968);transform-origin:0 0;">Дата</span>
<span class="t" style="left:579.50px;top:432.00px;font-family:'Liberation Sans', sans-serif;font-size:13px;line-height:1;color:#333;letter-spacing:0.2px;-webkit-text-stroke:0.25px #333;">Цена</span>
<span class="t" style="left:386.90px;top:452.75px;font-family:'Liberation Sans', sans-serif;font-size:13px;line-height:1;color:#262626;letter-spacing:0.2px;-webkit-text-stroke:0.25px #262626;transform:scaleX(0.7599);transform-origin:0 0;">1</span>
<span class="t" style="left:437.00px;top:452.75px;font-family:'Liberation Sans', sans-serif;font-size:13px;line-height:1;color:#262626;letter-spacing:0.2px;-webkit-text-stroke:0.25px #262626;transform:scaleX(0.9420);transform-origin:0 0;">03.10.2018</span>
<span class="t" style="left:652.05px;top:452.75px;font-family:'Liberation Sans', sans-serif;font-size:13px;line-height:1;color:#262626;letter-spacing:0.2px;-webkit-text-stroke:0.25px #262626;transform:scaleX(0.9354);transform-origin:0 0;">2 125р.</span>
<span class="t" style="left:385.60px;top:472.75px;font-family:'Liberation Sans', sans-serif;font-size:13px;line-height:1;color:#262626;letter-spacing:0.2px;-webkit-text-stroke:0.25px #262626;transform:scaleX(0.9396);transform-origin:0 0;">5</span>
<span class="t" style="left:437.00px;top:472.75px;font-family:'Liberation Sans', sans-serif;font-size:13px;line-height:1;color:#262626;letter-spacing:0.2px;-webkit-text-stroke:0.25px #262626;transform:scaleX(0.9559);transform-origin:0 0;">23.11.2018</span>
<span class="t" style="left:652.05px;top:472.75px;font-family:'Liberation Sans', sans-serif;font-size:13px;line-height:1;color:#262626;letter-spacing:0.2px;-webkit-text-stroke:0.25px #262626;transform:scaleX(0.9354);transform-origin:0 0;">2 549р.</span>
<span class="t" style="left:378.90px;top:492.75px;font-family:'Liberation Sans', sans-serif;font-size:13px;line-height:1;color:#262626;letter-spacing:0.2px;-webkit-text-stroke:0.25px #262626;transform:scaleX(0.9199);transform-origin:0 0;">17</span>
<span class="t" style="left:437.00px;top:492.75px;font-family:'Liberation Sans', sans-serif;font-size:13px;line-height:1;color:#262626;letter-spacing:0.2px;-webkit-text-stroke:0.25px #262626;transform:scaleX(0.9420);transform-origin:0 0;">07.12.2018</span>
<span class="t" style="left:652.05px;top:492.75px;font-family:'Liberation Sans', sans-serif;font-size:13px;line-height:1;color:#262626;letter-spacing:0.2px;-webkit-text-stroke:0.25px #262626;transform:scaleX(0.9354);transform-origin:0 0;">1 530р.</span>
<span class="t" style="left:369.40px;top:512.80px;font-family:'Liberation Sans', sans-serif;font-size:13px;line-height:1;color:#262626;letter-spacing:0.2px;-webkit-text-stroke:0.25px #262626;">(№)</span>
<span class="t" style="left:268.00px;top:643.54px;font-family:'Liberation Sans', sans-serif;font-size:12px;line-height:1;color:#555;letter-spacing:0.35px;transform:scaleX(0.8813);transform-origin:0 0;">Запись:</span>
<span class="t" style="left:345.70px;top:643.54px;font-family:'Liberation Sans', sans-serif;font-size:12px;line-height:1;color:#111;letter-spacing:0.35px;transform:scaleX(0.8535);transform-origin:0 0;">1 из 3</span>
<span class="t" style="left:477.40px;top:643.84px;font-family:'Liberation Sans', sans-serif;font-size:12px;line-height:1;color:#999;letter-spacing:0.35px;transform:scaleX(0.8932);transform-origin:0 0;">Нет фильтра</span>
<span class="t" style="left:562.70px;top:643.84px;font-family:'Liberation Sans', sans-serif;font-size:12px;line-height:1;color:#111;letter-spacing:0.35px;transform:scaleX(0.9231);transform-origin:0 0;">Поиск</span>
<span class="t" style="left:229.80px;top:985.44px;font-family:'Liberation Sans', sans-serif;font-size:12px;line-height:1;color:#555;letter-spacing:0.35px;transform:scaleX(0.8701);transform-origin:0 0;">Запись:</span>
<span class="t" style="left:307.20px;top:985.44px;font-family:'Liberation Sans', sans-serif;font-size:12px;line-height:1;color:#111;letter-spacing:0.35px;transform:scaleX(0.8681);transform-origin:0 0;">4 из 15</span>
<span class="t" style="left:439.00px;top:985.34px;font-family:'Liberation Sans', sans-serif;font-size:12px;line-height:1;color:#999;letter-spacing:0.35px;transform:scaleX(0.8986);transform-origin:0 0;">Нет фильтра</span>
<span class="t" style="left:524.60px;top:985.34px;font-family:'Liberation Sans', sans-serif;font-size:12px;line-height:1;color:#111;letter-spacing:0.35px;transform:scaleX(0.9145);transform-origin:0 0;">Поиск</span>
<span class="t" style="left:8.00px;top:1005.34px;font-family:'Liberation Sans', sans-serif;font-size:12px;line-height:1;color:#444444;letter-spacing:0.35px;transform:scaleX(0.9293);transform-origin:0 0;">Режим формы</span>
<span class="t" style="left:1096.60px;top:1005.84px;font-family:'Liberation Sans', sans-serif;font-size:12px;line-height:1;color:#444444;letter-spacing:0.35px;transform:scaleX(0.8747);transform-origin:0 0;">Num Lock</span>
<svg style="position:absolute;left:395px;top:697px" width="38" height="38" viewBox="0 0 38 38"><rect x="0.5" y="0.5" width="37" height="37" rx="2.5" fill="none" stroke="#222" stroke-width="1" stroke-dasharray="1.2,1.2"/></svg>
</body></html>
